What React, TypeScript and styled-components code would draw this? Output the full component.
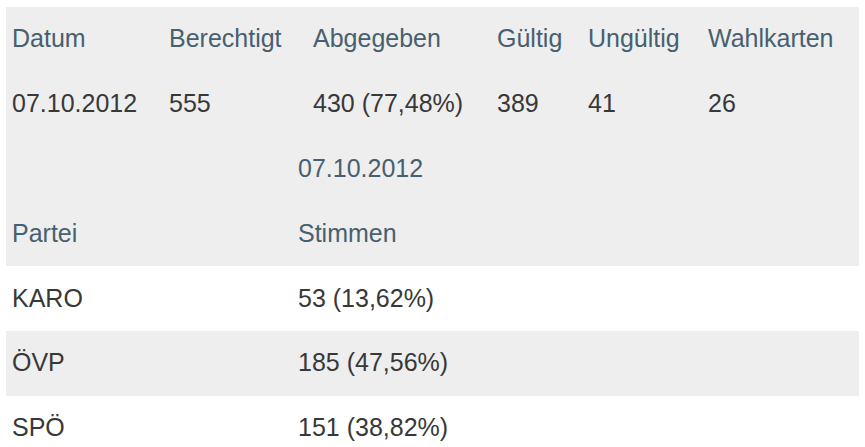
import React from "react";
import styled, { createGlobalStyle } from "styled-components";

const Global = createGlobalStyle`
  html, body { margin: 0; padding: 0; background: #fff; }
  body { font-family: "Liberation Sans", Arial, sans-serif; }
`;

const Page = styled.div`
  padding: 7px 6px 0 6px;
  width: 853px;
`;

const Table = styled.table`
  width: 853px;
  border-collapse: collapse;
  border-spacing: 0;
  table-layout: fixed;
  font-size: 25px;
  line-height: 36px;
`;

const Row = styled.tr<{ $shade?: boolean }>`
  height: 64.8px;
  background: ${(p) => (p.$shade ? "#eeeeee" : "#ffffff")};
`;

const Head = styled.th`
  text-align: left;
  font-weight: normal;
  color: #47606f;
  padding: 13px 6px 15px 6px;
  white-space: nowrap;
  vertical-align: middle;
`;

const Cell = styled.td`
  text-align: left;
  color: #383838;
  padding: 13px 6px 15px 6px;
  white-space: nowrap;
  vertical-align: middle;
`;

const summaryCols = [157, 144, 184, 91, 120, 157];
const summaryHead = ["Datum", "Berechtigt", "Abgegeben", "Gültig", "Ungültig", "Wahlkarten"];
const summaryData = ["07.10.2012", "555", "430 (77,48%)", "389", "41", "26"];

const parties = [
  { name: "KARO", votes: "53 (13,62%)" },
  { name: "ÖVP", votes: "185 (47,56%)" },
  { name: "SPÖ", votes: "151 (38,82%)" },
];

export default function App() {
  return (
    <>
      <Global />
      <Page>
        <Table>
          <colgroup>
            {summaryCols.map((w, i) => (
              <col key={i} style={{ width: w }} />
            ))}
          </colgroup>
          <thead>
            <Row $shade>
              {summaryHead.map((h) => (
                <Head key={h}>{h}</Head>
              ))}
            </Row>
          </thead>
          <tbody>
            <Row $shade>
              {summaryData.map((d, i) => (
                <Cell key={i}>{d}</Cell>
              ))}
            </Row>
          </tbody>
        </Table>
        <Table>
          <colgroup>
            <col style={{ width: 286 }} />
            <col style={{ width: 567 }} />
          </colgroup>
          <thead>
            <Row $shade>
              <Head />
              <Head>07.10.2012</Head>
            </Row>
            <Row $shade>
              <Head>Partei</Head>
              <Head>Stimmen</Head>
            </Row>
          </thead>
          <tbody>
            {parties.map((p, i) => (
              <Row key={p.name} $shade={i % 2 === 1}>
                <Cell>{p.name}</Cell>
                <Cell>{p.votes}</Cell>
              </Row>
            ))}
          </tbody>
        </Table>
      </Page>
    </>
  );
}
